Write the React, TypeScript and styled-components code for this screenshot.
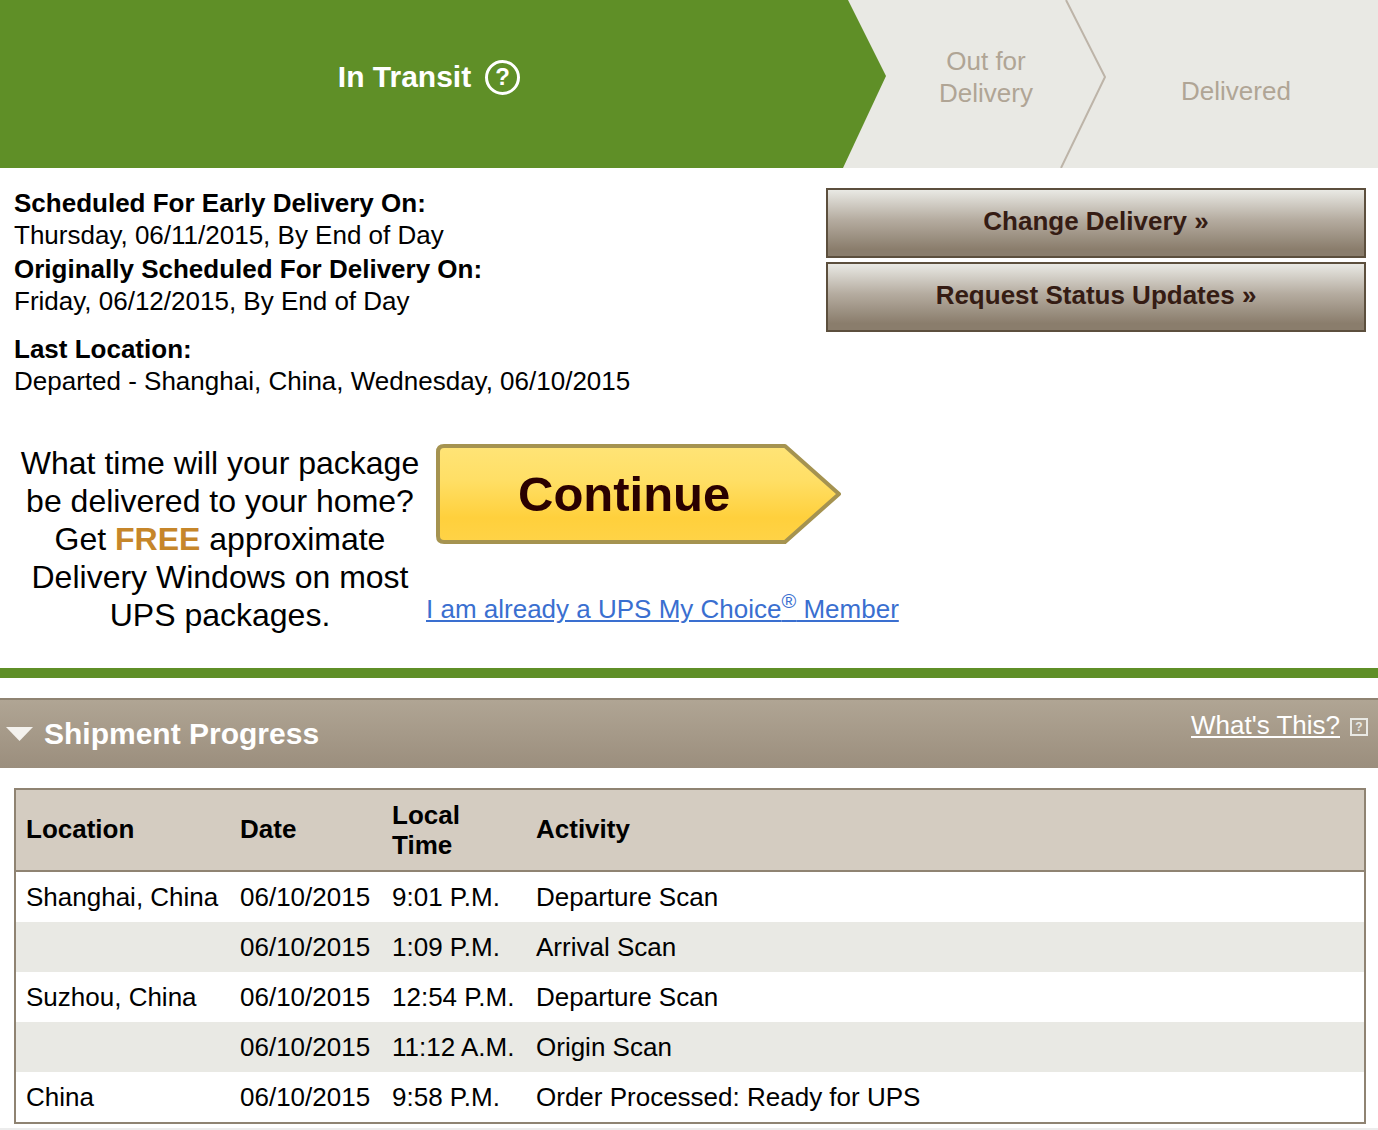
import React from 'react';
import styled, { createGlobalStyle } from 'styled-components';

const GlobalStyle = createGlobalStyle`
html, body {
    margin: 0;
    padding: 0;
    background: #fff;
    font-family: "Liberation Sans", Arial, sans-serif;
    color: #000;
}
`;

const Page = styled.div`
width: 1378px;
height: 1130px;
overflow: hidden;
`;

const Tracker = styled.div`
position: relative;
display: grid;
grid-template-columns: 858px 236px 1fr;
height: 168px;
background: #e9e9e4;
`;

const TrackerArt = styled.svg`
position: absolute;
top: 0;
left: 0;
`;

const Step = styled.div<{ $nudge: number; $inset?: number }>`
position: relative;
display: flex;
align-items: center;
justify-content: center;
gap: 14px;
box-sizing: border-box;
padding-left: ${({ $inset }) => $inset ?? 0}px;
padding-top: ${({ $nudge }) => ($nudge > 0 ? $nudge : 0)}px;
padding-bottom: ${({ $nudge }) => ($nudge < 0 ? -$nudge : 0)}px;
font-size: 26px;
line-height: 32px;
text-align: center;
color: #b0a595;
`;

const CurrentLabel = styled.span`
font-size: 30px;
font-weight: bold;
color: #fff;
`;

const HelpCircle = styled.span`
display: flex;
align-items: center;
justify-content: center;
box-sizing: border-box;
width: 35px;
height: 35px;
border: 3px solid #fff;
border-radius: 50%;
font-size: 24px;
font-weight: bold;
color: #fff;
`;

const Summary = styled.div`
display: flex;
justify-content: space-between;
padding: 19px 12px 0 14px;
height: 256px;
box-sizing: border-box;
`;

const Facts = styled.div`
font-size: 26px;
line-height: 32px;
`;

const FactBlock = styled.div<{ $gap: number }>`
margin-bottom: ${({ $gap }) => $gap}px;
`;

const FactTitle = styled.div`
font-weight: bold;
`;

const Actions = styled.div`
display: flex;
flex-direction: column;
gap: 4px;
width: 540px;
margin-top: 1px;
`;

const ActionButton = styled.button`
height: 70px;
padding: 0 0 4px;
border: 2px solid #5c4f3d;
background: linear-gradient(#e9e9e4 0%, #b5aca0 45%, #8a7d6c 90%, #8a7d6c 100%);
font-family: inherit;
font-size: 26px;
font-weight: bold;
color: #351c14;
`;

const Promo = styled.div`
display: flex;
height: 244px;
box-sizing: border-box;
padding-top: 20px;
`;

const PromoText = styled.div`
width: 400px;
margin-left: 20px;
font-size: 32px;
line-height: 38px;
text-align: center;
white-space: nowrap;
`;

const Free = styled.span`
font-weight: bold;
color: #c6862a;
`;

const PromoSide = styled.div`
display: flex;
flex-direction: column;
margin-left: 6px;
`;

const ContinueButton = styled.div`
position: relative;
display: flex;
align-items: center;
justify-content: flex-start;
width: 406px;
height: 100px;
margin: 0 0 0 10px;
padding-left: 82px;
box-sizing: border-box;
font-size: 49px;
font-weight: bold;
color: #2a0000;
`;

const ContinueArt = styled.svg`
position: absolute;
top: 0;
left: 0;
`;

const ContinueLabel = styled.span`
position: relative;
`;

const MemberLink = styled.a`
margin-top: 48px;
font-size: 26px;
line-height: 34px;
color: #3a6fd0;
text-decoration: underline;
sup {
    font-size: 20px;
    line-height: 0;
}
`;

const Rule = styled.div`
height: 10px;
background: #5f8f27;
`;

const SectionBar = styled.div`
display: flex;
align-items: flex-start;
justify-content: space-between;
height: 70px;
margin-top: 20px;
box-sizing: border-box;
border-top: 2px solid #8f8372;
background: linear-gradient(#b0a594, #9b8e7d);
color: #fff;
`;

const SectionTitle = styled.div`
display: flex;
align-items: center;
gap: 11px;
height: 68px;
padding-left: 6px;
font-size: 30px;
font-weight: bold;
`;

const WhatsThis = styled.div`
display: flex;
align-items: center;
gap: 10px;
padding: 10px 10px 0 0;
font-size: 26px;
line-height: 30px;
a {
    color: #fff;
    text-decoration: underline;
}
`;

const HelpBox = styled.span`
display: flex;
align-items: center;
justify-content: center;
box-sizing: border-box;
width: 18px;
height: 18px;
margin-top: 4px;
border: 2px solid #e9e9e4;
font-size: 12px;
font-weight: bold;
color: #e9e9e4;
`;

const TableFrame = styled.div`
margin: 20px 12px 0 14px;
border: 2px solid #8f8372;
`;

const Table = styled.table`
width: 100%;
border-collapse: separate;
border-spacing: 0;
table-layout: fixed;
font-size: 26px;
`;

const HeadCell = styled.th<{ $width?: number; $twoLines?: boolean }>`
width: ${({ $width }) => ($width ? `${$width}px` : 'auto')};
height: 82px;
box-sizing: border-box;
padding: 0 0 ${({ $twoLines }) => ($twoLines ? 0 : 2)}px 10px;
border-bottom: 2px solid #8f8372;
background: #d4ccc1;
font-weight: bold;
line-height: 30px;
text-align: left;
`;

const Row = styled.tr<{ $shaded: boolean }>`
height: 50px;
background: ${({ $shaded }) => ($shaded ? '#e9e9e4' : '#fff')};
`;

const Cell = styled.td`
padding: 0 0 0 10px;
white-space: nowrap;
`;

const BottomEdge = styled.div`
height: 2px;
margin-top: 4px;
background: #ececec;
`;

interface IScan {
    location: string;
    date: string;
    time: string;
    activity: string;
}

const scans: IScan[] = [
    { location: 'Shanghai, China', date: '06/10/2015', time: '9:01 P.M.', activity: 'Departure Scan' },
    { location: '', date: '06/10/2015', time: '1:09 P.M.', activity: 'Arrival Scan' },
    { location: 'Suzhou, China', date: '06/10/2015', time: '12:54 P.M.', activity: 'Departure Scan' },
    { location: '', date: '06/10/2015', time: '11:12 A.M.', activity: 'Origin Scan' },
    { location: 'China', date: '06/10/2015', time: '9:58 P.M.', activity: 'Order Processed: Ready for UPS' },
];

const App: React.FC = () => {
    return (
        <Page>
            <GlobalStyle />
            <Tracker>
                <TrackerArt width="1378" height="168" viewBox="0 0 1378 168">
                    <polygon points="0,0 848,0 886,76 843,168 0,168" fill="#5f8f27" />
                    <polyline points="1066,0 1105,77 1061,168" fill="none" stroke="#bdb4a8" strokeWidth="2" />
                </TrackerArt>
                <Step $nudge={-14}>
                    <CurrentLabel>In Transit</CurrentLabel>
                    <HelpCircle>?</HelpCircle>
                </Step>
                <Step $nudge={-14} $inset={20}>
                    Out for
                    <br />
                    Delivery
                </Step>
                <Step $nudge={14}>Delivered</Step>
            </Tracker>
            <Summary>
                <Facts>
                    <FactBlock $gap={2}>
                        <FactTitle>Scheduled For Early Delivery On:</FactTitle>
                        <div>Thursday, 06/11/2015, By End of Day</div>
                    </FactBlock>
                    <FactBlock $gap={16}>
                        <FactTitle>Originally Scheduled For Delivery On:</FactTitle>
                        <div>Friday, 06/12/2015, By End of Day</div>
                    </FactBlock>
                    <FactTitle>Last Location:</FactTitle>
                    <div>Departed - Shanghai, China, Wednesday, 06/10/2015</div>
                </Facts>
                <Actions>
                    <ActionButton>Change Delivery »</ActionButton>
                    <ActionButton>Request Status Updates »</ActionButton>
                </Actions>
            </Summary>
            <Promo>
                <PromoText>
                    What time will your package
                    <br />
                    be delivered to your home?
                    <br />
                    Get <Free>FREE</Free> approximate
                    <br />
                    Delivery Windows on most
                    <br />
                    UPS packages.
                </PromoText>
                <PromoSide>
                    <ContinueButton>
                        <ContinueArt width="406" height="100" viewBox="0 0 406 100">
                            <defs>
                                <linearGradient id="continueFill" x1="0" y1="0" x2="0" y2="1">
                                    <stop offset="0" stopColor="#ffe477" />
                                    <stop offset="0.35" stopColor="#ffdf66" />
                                    <stop offset="0.75" stopColor="#ffd03c" />
                                    <stop offset="1" stopColor="#ffd347" />
                                </linearGradient>
                            </defs>
                            <path
                                d="M8 2 H349 L403 50 L349 98 H8 Q2 98 2 92 V8 Q2 2 8 2 Z"
                                fill="url(#continueFill)"
                                stroke="#a59350"
                                strokeWidth="4"
                                strokeLinejoin="round"
                            />
                        </ContinueArt>
                        <ContinueLabel>Continue</ContinueLabel>
                    </ContinueButton>
                    <MemberLink href="#">
                        I am already a UPS My Choice<sup>®</sup> Member
                    </MemberLink>
                </PromoSide>
            </Promo>
            <Rule />
            <SectionBar>
                <SectionTitle>
                    <svg width="27" height="14" viewBox="0 0 27 14">
                        <polygon points="0,0 27,0 13.5,14" fill="#f4f2ee" />
                    </svg>
                    Shipment Progress
                </SectionTitle>
                <WhatsThis>
                    <a href="#">What's This?</a>
                    <HelpBox>?</HelpBox>
                </WhatsThis>
            </SectionBar>
            <TableFrame>
                <Table>
                    <thead>
                        <tr>
                            <HeadCell $width={214}>Location</HeadCell>
                            <HeadCell $width={152}>Date</HeadCell>
                            <HeadCell $width={144} $twoLines>
                                Local
                                <br />
                                Time
                            </HeadCell>
                            <HeadCell>Activity</HeadCell>
                        </tr>
                    </thead>
                    <tbody>
                        {scans.map((scan, index) => (
                            <Row key={`${scan.time}-${index}`} $shaded={index % 2 === 1}>
                                <Cell>{scan.location}</Cell>
                                <Cell>{scan.date}</Cell>
                                <Cell>{scan.time}</Cell>
                                <Cell>{scan.activity}</Cell>
                            </Row>
                        ))}
                    </tbody>
                </Table>
            </TableFrame>
            <BottomEdge />
        </Page>
    );
};

export default App;
